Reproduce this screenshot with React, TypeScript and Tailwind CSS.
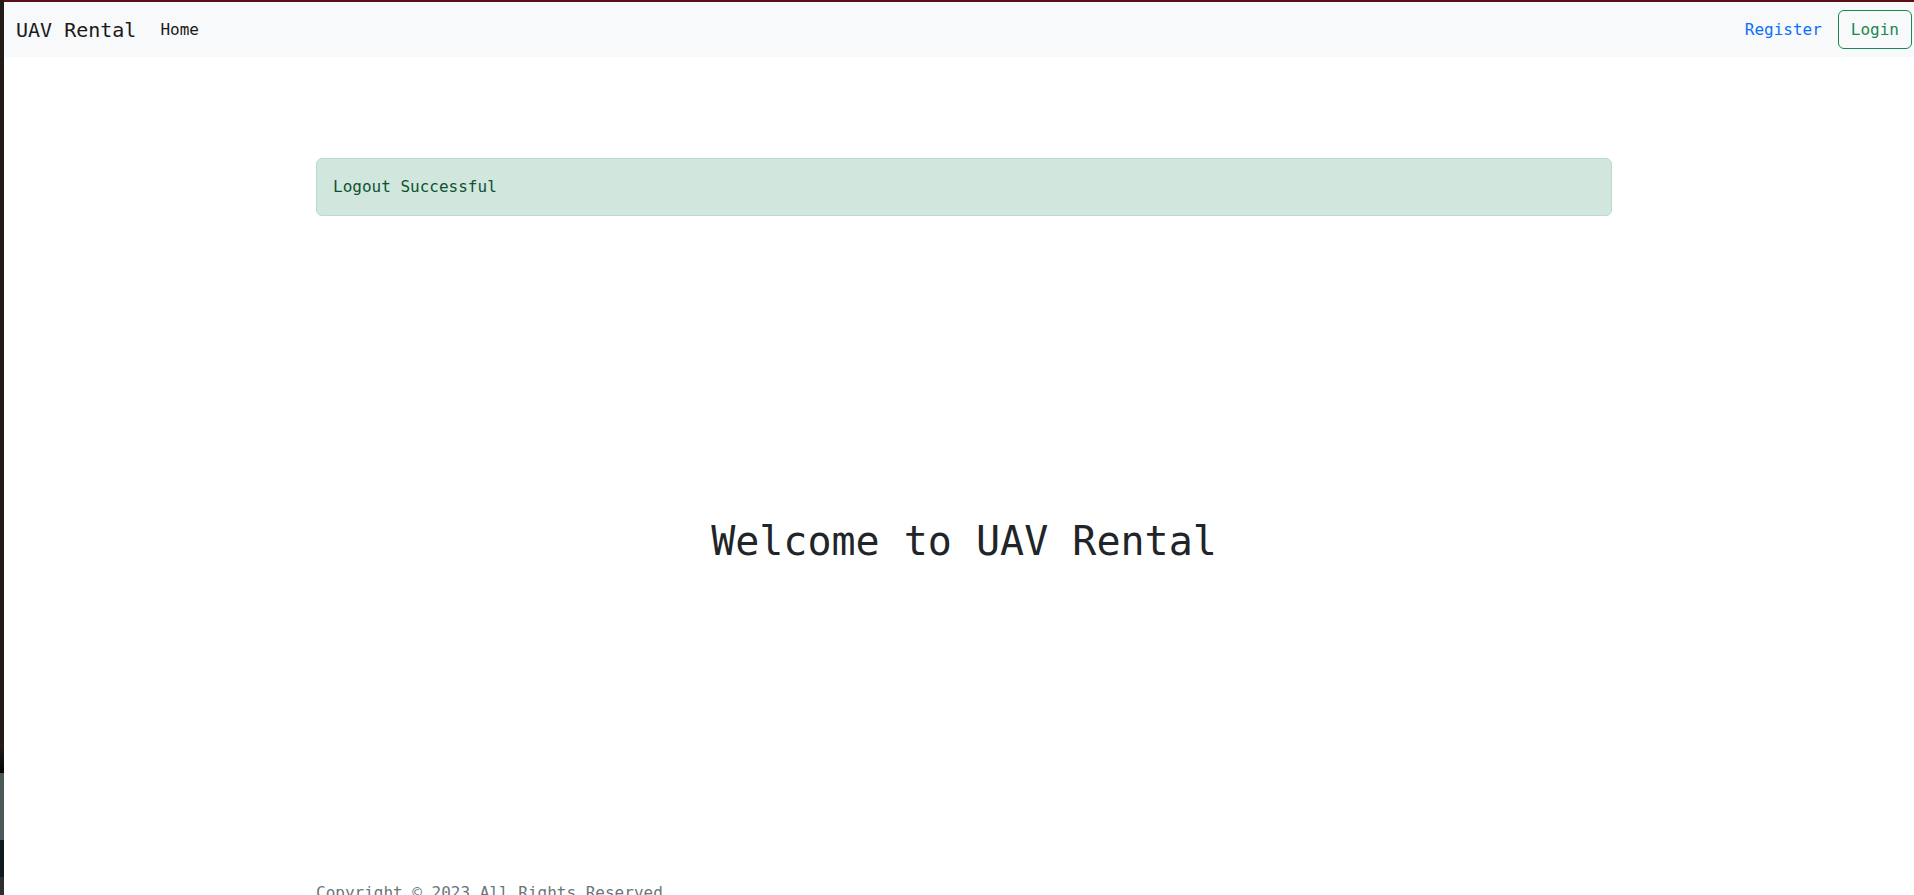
import React, { FC } from 'react';

const mono = { fontFamily: '"DejaVu Sans Mono", "Liberation Mono", monospace' };

// strip of the neighbouring window on the left edge
const EdgeStrip: FC = () => (
    <div className="w-[4px] shrink-0 flex flex-col">
        <div className="h-[750px] shrink-0 bg-[#221b18]" />
        <div className="h-[23px] shrink-0 bg-gradient-to-b from-[#1c1b1a] to-[#050505]" />
        <div className="h-[67px] shrink-0 bg-[#4b5858]" />
        <div className="h-[37px] shrink-0 bg-[#0f1b21]" />
        <div className="flex-1 bg-[#2e2e2e]" />
    </div>
);

const Navbar: FC = () => (
    <nav className="h-[55px] shrink-0 bg-[#f8f9fa] px-3 flex items-center">
        <span className="text-[20px] leading-[30px] text-[#1a1a1a] mr-4">UAV Rental</span>
        <a className="px-2 text-[16px] leading-6 text-[#1a1a1a]">Home</a>
        <div className="ml-auto flex items-center gap-4">
            <a className="text-[16px] leading-6 text-[#0d6efd]">Register</a>
            <button className="h-[39px] px-3 border border-[#198754] rounded-[6px] text-[16px] leading-6 text-[#198754]" style={mono}>
                Login
            </button>
        </div>
    </nav>
);

export default function App() {
    return (
        <div className="flex h-screen overflow-hidden bg-white" style={mono}>
            <EdgeStrip />
            <div className="w-[1920px] shrink-0 flex flex-col">
                <div className="h-[2px] shrink-0 bg-[#5a1018]" />
                <Navbar />

                <main className="w-[1296px] shrink-0 mx-auto">
                    {/* flash message */}
                    <div className="mt-[101px] border border-[#badbcc] bg-[#d1e7dd] rounded-[6px] p-4 text-[16px] leading-6 text-[#0f5132]">
                        Logout Successful
                    </div>

                    <h1 className="mt-[301px] text-center text-[40px] leading-[48px] text-[#212529]">
                        Welcome to UAV Rental
                    </h1>

                    <footer className="mt-[316px] text-[16px] leading-6 text-[#6c757d]">
                        Copyright © 2023 All Rights Reserved
                    </footer>
                </main>
            </div>
        </div>
    );
}
